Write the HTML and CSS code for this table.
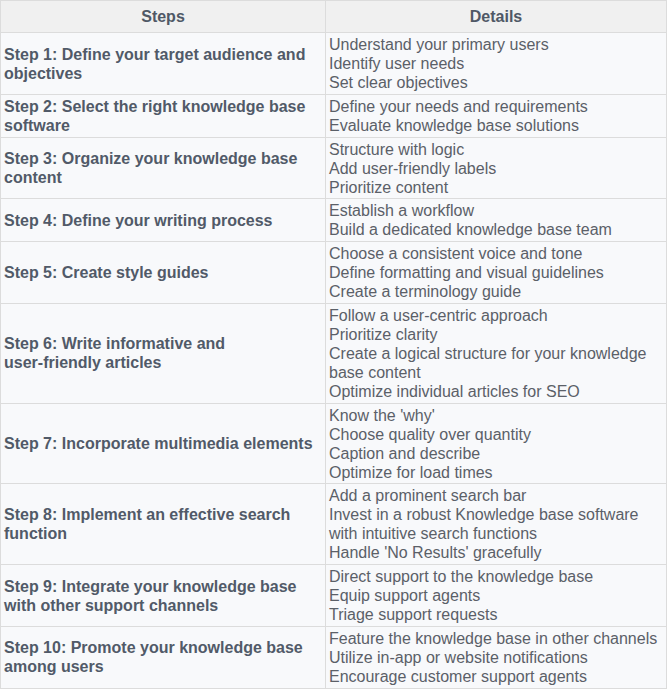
FILE: index.html
```html
<!DOCTYPE html>
<html lang="en">
<head>
<meta charset="utf-8">
<title>Knowledge base steps</title>
<link rel="stylesheet" href="styles.css">
</head>
<body>
<table class="steps-table">
  <thead>
    <tr>
      <th class="col-step">Steps</th>
      <th class="col-detail">Details</th>
    </tr>
  </thead>
  <tbody>
    <tr>
      <td class="step">Step 1: Define your target audience and objectives</td>
      <td class="detail">Understand your primary users<br>Identify user needs<br>Set clear objectives</td>
    </tr>
    <tr>
      <td class="step">Step 2: Select the right knowledge base software</td>
      <td class="detail">Define your needs and requirements<br>Evaluate knowledge base solutions</td>
    </tr>
    <tr>
      <td class="step">Step 3: Organize your knowledge base content</td>
      <td class="detail">Structure with logic<br>Add user-friendly labels<br>Prioritize content</td>
    </tr>
    <tr>
      <td class="step">Step 4: Define your writing process</td>
      <td class="detail">Establish a workflow<br>Build a dedicated knowledge base team</td>
    </tr>
    <tr>
      <td class="step">Step 5: Create style guides</td>
      <td class="detail">Choose a consistent voice and tone<br>Define formatting and visual guidelines<br>Create a terminology guide</td>
    </tr>
    <tr>
      <td class="step">Step 6: Write informative and <span class="nowrap">user-friendly</span> articles</td>
      <td class="detail">Follow a user-centric approach<br>Prioritize clarity<br>Create a logical structure for your knowledge base content<br>Optimize individual articles for SEO</td>
    </tr>
    <tr>
      <td class="step">Step 7: Incorporate multimedia elements</td>
      <td class="detail">Know the 'why'<br>Choose quality over quantity<br>Caption and describe<br>Optimize for load times</td>
    </tr>
    <tr>
      <td class="step">Step 8: Implement an effective search function</td>
      <td class="detail">Add a prominent search bar<br>Invest in a robust Knowledge base software with intuitive search functions<br>Handle 'No Results' gracefully</td>
    </tr>
    <tr>
      <td class="step">Step 9: Integrate your knowledge base with other support channels</td>
      <td class="detail">Direct support to the knowledge base<br>Equip support agents<br>Triage support requests</td>
    </tr>
    <tr>
      <td class="step">Step 10: Promote your knowledge base among users</td>
      <td class="detail">Feature the knowledge base in other channels<br>Utilize in-app or website notifications<br>Encourage customer support agents</td>
    </tr>
  </tbody>
</table>
</body>
</html>
```
FILE: styles.css
```css
html, body {
  margin: 0;
  padding: 0;
  background: #ffffff;
}

.steps-table {
  width: 667px;
  border-collapse: collapse;
  font-family: "Liberation Sans", Arial, sans-serif;
  font-size: 16px;
  line-height: 19px;
  table-layout: fixed;
}

.steps-table th,
.steps-table td {
  border: 1px solid #dcdcdc;
}

.steps-table thead tr {
  border-top: 1px solid #c4c4c4;
}

.steps-table th {
  background: #f0f0f0;
  color: #4f5866;
  font-weight: bold;
  text-align: center;
  padding: 6px 3px;
}

.col-step {
  width: 318px;
}

.steps-table td {
  background: #f8f9fb;
  padding: 2px 3px 1.75px;
  text-align: left;
}

.step {
  color: #515a68;
  font-weight: bold;
  vertical-align: middle;
}

.detail {
  color: #5b6068;
  vertical-align: top;
  padding-left: 2px;
}

.nowrap {
  white-space: nowrap;
}
```
